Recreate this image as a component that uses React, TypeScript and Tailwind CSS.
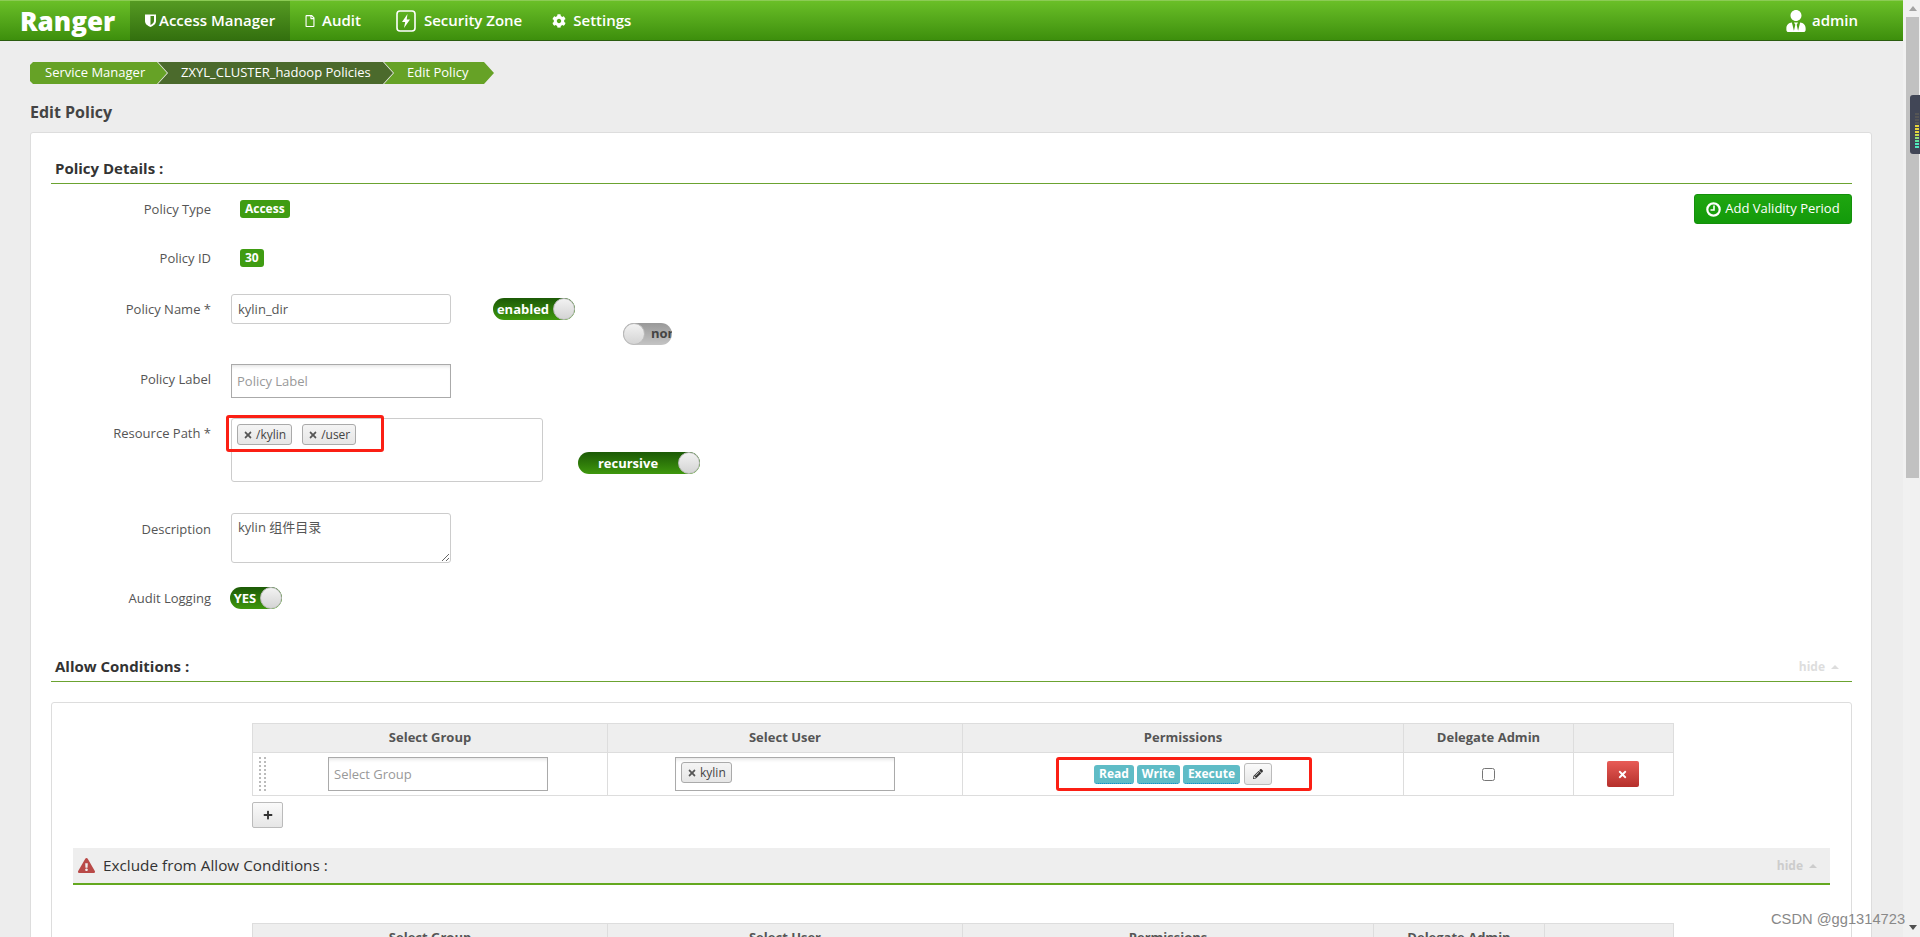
import React from 'react';
import { FaCog, FaExclamationTriangle, FaPencilAlt, FaPlus, FaRegFile, FaTimes, FaUserTie } from 'react-icons/fa';

const inputClass = 'border border-[#ccc] rounded-[3px] bg-white text-[13px] text-[#555] outline-none placeholder:text-[#999]';
const boxClass = 'border border-[#aaa] bg-white text-[13px] text-[#555] outline-none placeholder:text-[#999] shadow-[inset_0_4px_4px_-3px_#ddd]';

const ShieldIcon = () => (
    <svg width="11" height="13" viewBox="0 0 11 13" className="shrink-0">
        <path fill="#fff" fillRule="evenodd" d="M0 0.5h11v6.5c0 3-2.6 4.8-5.5 6C2.6 11.8 0 10 0 7zM5.5 2v9c1.800-0.900 3.500-2.200 3.500-4V2z" />
    </svg>
);

const BoltBoxIcon = () => (
    <svg width="20" height="22" viewBox="0 0 20 22" className="shrink-0">
        <rect x="1" y="1" width="18" height="20" rx="3" fill="none" stroke="#fff" strokeWidth="1.6" />
        <path fill="#fff" d="M11.500 4 6 12h3.200L8 18l6-8.500h-3.300z" />
    </svg>
);

const ClockIcon = () => (
    <svg width="15" height="15" viewBox="0 0 15 15" className="shrink-0">
        <circle cx="7.500" cy="7.500" r="6.200" fill="none" stroke="#fff" strokeWidth="2.200" />
        <path d="M8 3.500v4.500H4.500" fill="none" stroke="#fff" strokeWidth="1.600" />
    </svg>
);

const Caret = ({ color }: { color: string }) => (
    <span className="inline-block w-0 h-0 border-x-[4px] border-x-transparent border-b-[4px] ml-[6px] mb-[2px]" style={{ borderBottomColor: color }}></span>
);

const NavItem = ({ icon, label, className }: { icon: React.ReactNode; label: string; className: string }) => (
    <div className={`flex items-center h-full text-[15px] font-semibold text-white ${className}`}>
        {icon}
        <span>{label}</span>
    </div>
);

const Crumb = ({ label, first, dark }: { label: string; first?: boolean; dark?: boolean }) => (
    <div
        className={`h-[22px] flex items-center text-[13px] text-white ${
            first
                ? 'w-[137px] pl-[15px] [clip-path:polygon(3px_0,calc(100%-10px)_0,100%_50%,calc(100%-10px)_100%,3px_100%,0_calc(100%-3px),0_3px)]'
                : dark
                  ? 'w-[235px] -ml-[9px] pl-[23px] [clip-path:polygon(0_0,calc(100%-10px)_0,100%_50%,calc(100%-10px)_100%,0_100%,10px_50%)]'
                  : 'w-[110px] -ml-[9px] pl-[23px] [clip-path:polygon(0_0,calc(100%-10px)_0,100%_50%,calc(100%-10px)_100%,0_100%,10px_50%)]'
        } ${dark ? 'bg-[#4b6a2c]' : 'bg-[#66a226]'}`}
    >
        {label}
    </div>
);

const Row = ({ label, h, mt, children }: { label: string; h: string; mt: string; children: React.ReactNode }) => (
    <div className={`flex items-start ${h}`}>
        <div className={`w-[160px] shrink-0 text-right text-[13px] leading-[20px] text-[#555] ${mt}`}>{label}</div>
        <div className="flex-1 flex items-start ml-[20px]">{children}</div>
    </div>
);

const Tag = ({ label, className }: { label: string; className?: string }) => (
    <span className={`inline-flex items-center h-[21px] px-[5px] rounded-[3px] border border-[#aaa] bg-linear-to-b from-[#f4f4f4] to-[#e6e6e6] text-[12px] text-[#444] ${className ?? ''}`}>
        <FaTimes className="text-[#555] text-[10px] mr-[3px]" />
        {label}
    </span>
);

const Knob = () => (
    <span className="w-[22px] h-[22px] shrink-0 rounded-full border border-[#bbb] bg-linear-to-b from-[#f2f2f2] to-[#d4d4d4]"></span>
);

const Toggle = ({ label, className }: { label: string; className: string }) => (
    <div className={`h-[22px] flex items-center justify-between rounded-full bg-linear-to-b from-[#1c5a06] to-[#3f980d] text-[13px] font-bold text-white overflow-hidden ${className}`}>
        <span className="flex-1 text-center pt-[1px]">{label}</span>
        <Knob />
    </div>
);

const SectionHead = ({ title, hide }: { title: string; hide?: boolean }) => (
    <div className="flex items-end justify-between h-[35px] pb-[5px] pl-[4px] border-b border-[#6ba330]">
        <span className="text-[15px] leading-[20px] font-bold text-[#333]">{title}</span>
        {hide && (
            <span className="text-[12px] leading-[18px] font-bold text-[#ddd] pr-[13px]">
                hide
                <Caret color="#ddd" />
            </span>
        )}
    </div>
);

const HeadCell = ({ label, className }: { label: string; className: string }) => (
    <th className={`border border-[#ddd] bg-[#eee] h-[29px] text-center text-[13px] font-bold text-[#555] p-0 ${className}`}>{label}</th>
);

const App = () => {
    return (
        <div className="flex h-[937px] overflow-hidden relative bg-[#ededed] font-['Open_Sans','Noto_Sans_CJK_SC',sans-serif]">
            <div className="w-[1903px] shrink-0 overflow-hidden">
                <header className="h-[41px] flex items-center border-b border-[#2b5c10] border-t border-t-[#8ccb55] bg-linear-to-b from-[#6abf27] to-[#3d8f0c]">
                    <div className="w-[130px] pl-[20px] text-[26px] font-extrabold text-white leading-none">Ranger</div>
                    <NavItem icon={<ShieldIcon />} label="Access Manager" className="w-[160px] pl-[15px] gap-[3px] bg-linear-to-b from-[#559a22] to-[#33700f]" />
                    <NavItem icon={<FaRegFile className="text-white text-[12px] mr-[6px]" />} label="Audit" className="ml-[14px]" />
                    <NavItem icon={<BoltBoxIcon />} label="Security Zone" className="ml-[35px] gap-[8px]" />
                    <NavItem icon={<FaCog className="text-white text-[14px] mr-[7px]" />} label="Settings" className="ml-[30px]" />
                    <div className="ml-auto mr-[45px] flex items-center gap-[5px] text-[15px] font-semibold text-white">
                        <FaUserTie className="text-[22px]" />
                        admin
                    </div>
                </header>

                <div className="flex ml-[30px] mt-[20px] pt-[1px]">
                    <Crumb label="Service Manager" first />
                    <Crumb label="ZXYL_CLUSTER_hadoop Policies" dark />
                    <Crumb label="Edit Policy" />
                </div>

                <h1 className="ml-[30px] mt-[17px] text-[16px] leading-[22px] font-bold text-[#444]">Edit Policy</h1>

                <div className="ml-[30px] mt-[9px] w-[1842px] h-[900px] bg-white border border-[#ddd] rounded-[3px] pl-[20px] pr-[19px]">
                    <div className="pt-[16px]">
                        <SectionHead title="Policy Details :" />
                    </div>

                    <div className="flex items-center justify-between h-[50px]">
                        <div className="flex items-center">
                            <div className="w-[160px] text-right text-[13px] text-[#555] pt-[2px]">Policy Type</div>
                            <span className="ml-[29px] h-[18px] px-[5px] flex items-center rounded-[3px] bg-[#3f9c12] text-[12px] font-bold text-white">Access</span>
                        </div>
                        <button className="h-[30px] w-[158px] flex items-center justify-center gap-[4px] rounded-[3px] border border-[#14900b] bg-linear-to-b from-[#1fa610] to-[#129a0a] text-[13px] text-white">
                            <ClockIcon />
                            Add Validity Period
                        </button>
                    </div>

                    <div className="flex items-center h-[48px]">
                        <div className="w-[160px] text-right text-[13px] text-[#555] pt-[2px]">Policy ID</div>
                        <span className="ml-[29px] h-[18px] px-[5px] flex items-center rounded-[3px] bg-[#3f9c12] text-[12px] font-bold text-white">30</span>
                    </div>

                    <div className="pt-[12px]">
                        <Row label="Policy Name *" h="h-[70px]" mt="mt-[5px]">
                            <input readOnly value="kylin_dir" className={`${inputClass} w-[220px] h-[30px] px-[6px]`} />
                            <Toggle label="enabled" className="w-[82px] ml-[42px] mt-[4px]" />
                            <div className="h-[22px] w-[49px] ml-[48px] mt-[29px] flex items-center rounded-full bg-linear-to-b from-[#999] to-[#c4c4c4] overflow-hidden text-[13px] font-bold text-[#444]">
                                <Knob />
                                <span className="ml-[6px]">non</span>
                            </div>
                        </Row>
                    </div>

                    <Row label="Policy Label" h="h-[54px]" mt="mt-[5px]">
                        <input readOnly placeholder="Policy Label" className={`${boxClass} w-[220px] h-[34px] px-[5px]`} />
                    </Row>

                    <Row label="Resource Path *" h="h-[95px]" mt="mt-[5px]">
                        <div className="relative w-[312px] h-[64px] border border-[#ccc] rounded-[3px] bg-white pl-[5px] pt-[5px] flex items-start gap-[10px]">
                            <Tag label="/kylin" />
                            <Tag label="/user" />
                            <div className="absolute left-[-6px] top-[-4px] w-[158px] h-[37px] border-[3px] border-[#fb1f14] rounded-[3px]"></div>
                        </div>
                        <Toggle label="recursive" className="w-[122px] ml-[35px] mt-[34px]" />
                    </Row>

                    <Row label="Description" h="h-[74px]" mt="mt-[6px]">
                        <textarea readOnly value="kylin 组件目录" className={`${inputClass} w-[220px] h-[50px] px-[6px] py-[4px]`} />
                    </Row>

                    <Row label="Audit Logging" h="h-[60px]" mt="mt-[1px]">
                        <Toggle label="YES" className="w-[52px] -ml-[1px]" />
                    </Row>

                    <SectionHead title="Allow Conditions :" hide />

                    <div className="mt-[20px] h-[400px] border border-[#ddd] rounded-[3px] px-[21px] pt-[20px]">
                        <table className="ml-[179px] w-[1421px] table-fixed border-collapse">
                            <thead>
                                <tr>
                                    <HeadCell label="Select Group" className="w-[355px]" />
                                    <HeadCell label="Select User" className="w-[355px]" />
                                    <HeadCell label="Permissions" className="w-[441px]" />
                                    <HeadCell label="Delegate Admin" className="w-[170px]" />
                                    <HeadCell label="" className="w-[100px]" />
                                </tr>
                            </thead>
                            <tbody>
                                <tr className="h-[43px]">
                                    <td className="border border-[#ddd] p-0">
                                        <div className="flex items-center pl-[6px]">
                                            <div className="h-[34px] w-[7px] flex justify-between shrink-0">
                                                <span className="border-l-[2px] border-dotted border-[#bbb]"></span>
                                                <span className="border-l-[2px] border-dotted border-[#bbb]"></span>
                                            </div>
                                            <input readOnly placeholder="Select Group" className={`${boxClass} ml-[62px] w-[220px] h-[34px] px-[5px]`} />
                                        </div>
                                    </td>
                                    <td className="border border-[#ddd] p-0">
                                        <div className={`${boxClass} ml-[67px] w-[220px] h-[34px] pl-[5px] pt-[4px]`}>
                                            <Tag label="kylin" />
                                        </div>
                                    </td>
                                    <td className="border border-[#ddd] p-0">
                                        <div className="relative flex items-center justify-center gap-[3px] pr-[0px]">
                                            {['Read', 'Write', 'Execute'].map((p) => (
                                                <span key={p} className="h-[19px] px-[5px] flex items-center rounded-[3px] bg-[#5fbcc6] border-b border-dotted border-b-[#08c] text-[12px] font-bold text-white">{p}</span>
                                            ))}
                                            <button className="ml-[1px] w-[28px] h-[22px] flex items-center justify-center rounded-[3px] border border-[#bbb] bg-linear-to-b from-[#fafafa] to-[#e6e6e6]">
                                                <FaPencilAlt className="text-[#333] text-[10px]" />
                                            </button>
                                            <div className="absolute left-[93px] top-[-6px] w-[256px] h-[34px] border-[3px] border-[#fb1f14] rounded-[3px]"></div>
                                        </div>
                                    </td>
                                    <td className="border border-[#ddd] p-0">
                                        <div className="flex justify-center">
                                            <input type="checkbox" readOnly className="w-[13px] h-[13px]" />
                                        </div>
                                    </td>
                                    <td className="border border-[#ddd] p-0">
                                        <div className="flex justify-center pr-[2px]">
                                            <button className="w-[32px] h-[26px] flex items-center justify-center rounded-[2px] bg-linear-to-b from-[#e85c57] to-[#b52f2b]">
                                                <FaTimes className="text-white text-[11px]" />
                                            </button>
                                        </div>
                                    </td>
                                </tr>
                            </tbody>
                        </table>

                        <button className="ml-[179px] mt-[6px] w-[31px] h-[26px] flex items-center justify-center rounded-[2px] border border-[#bbb] bg-linear-to-b from-[#fafafa] to-[#e6e6e6]">
                            <FaPlus className="text-[#333] text-[10px]" />
                        </button>

                        <div className="mt-[20px] h-[37px] flex items-center justify-between pl-[5px] pr-[13px] bg-[#eee] border-b-2 border-[#64a81f]">
                            <div className="flex items-center gap-[8px] text-[15.300px] text-[#333]">
                                <FaExclamationTriangle className="text-[#b94a48] text-[17px]" />
                                Exclude from Allow Conditions :
                            </div>
                            <span className="text-[12px] font-bold text-[#ccc]">
                                hide
                                <Caret color="#ccc" />
                            </span>
                        </div>

                        <table className="ml-[179px] mt-[38px] w-[1421px] table-fixed border-collapse">
                            <thead>
                                <tr>
                                    <HeadCell label="Select Group" className="w-[355px]" />
                                    <HeadCell label="Select User" className="w-[355px]" />
                                    <HeadCell label="Permissions" className="w-[411px]" />
                                    <HeadCell label="Delegate Admin" className="w-[171px]" />
                                    <HeadCell label="" className="w-[129px]" />
                                </tr>
                            </thead>
                        </table>
                    </div>
                </div>
            </div>

            <div className="flex-1 flex flex-col items-center bg-[#f1f1f1] pl-[2px]">
                <span className="mt-[6px] w-0 h-0 border-x-[4px] border-x-transparent border-b-[5px] border-b-[#a3a3a3]"></span>
                <div className="mt-[6px] w-[13px] h-[461px] bg-[#c1c1c1]"></div>
                <span className="mt-auto mb-[7px] w-0 h-0 border-x-[4px] border-x-transparent border-t-[5px] border-t-[#505050]"></span>
            </div>

            <div className="absolute right-0 top-[95px] w-[10px] h-[59px] rounded-l-[3px] bg-[#414656] flex flex-col justify-end items-end gap-[1px] pb-[6px] pr-[1px]">
                {['#555', '#555', '#555', '#555', '#e6d33c', '#e6d33c', '#e6d33c', '#c9d94a', '#8fdc7a', '#5fe3a0', '#4fe8c0', '#4fe8c0'].map((c, i) => (
                    <span key={i} className="w-[4px] h-[2px]" style={{ backgroundColor: c }}></span>
                ))}
            </div>

            <div className="absolute left-[1771px] top-[909px] text-[14.700px] leading-[20px] text-[#888] font-['Liberation_Sans',sans-serif]">CSDN @gg1314723</div>
        </div>
    );
};

export default App;
